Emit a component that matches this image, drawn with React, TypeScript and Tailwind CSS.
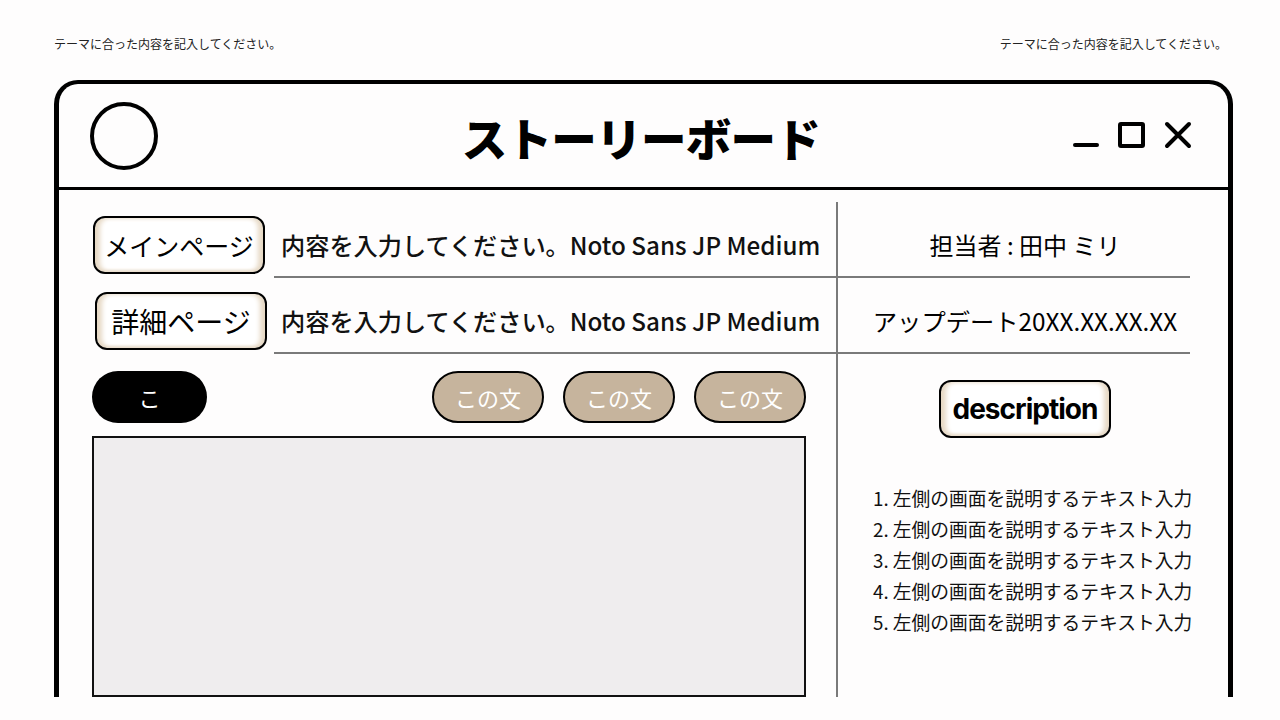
import React from 'react';

const jp = { fontFamily: '"Noto Sans CJK JP", "Noto Sans", sans-serif' };

const PageButton = ({ label, className = '' }: { label: string; className?: string }) => (
  <div
    className={`flex h-[58px] w-[172px] shrink-0 items-center justify-center rounded-[12px] border-2 border-black bg-white leading-none text-black shadow-[inset_6px_0_5px_-1px_#e6d8c4,inset_-6px_0_5px_-1px_#e6d8c4,inset_0_-3px_3px_-1px_#eee4d6] ${className}`}
  >
    {label}
  </div>
);

const InfoRow = ({ label, text, shift = '' }: { label: string; text: string; shift?: string }) => (
  <div className="flex items-end">
    <PageButton label={label} className={`mb-[4px] ${shift}`} />
    <div className="ml-[9px] flex h-[76px] flex-1 items-center border-b-2 border-[#7a7a7a] pl-[7px] pt-[12px] text-[24.2px] font-medium leading-none text-[#111]">
      {text}
    </div>
  </div>
);

const SidePill = () => (
  <div className="flex h-[52px] w-[112px] items-center justify-center rounded-full border-2 border-black bg-[#c6b49d] text-[22px] leading-none text-white">
    この文
  </div>
);

export default function App() {
  const items = [1, 2, 3, 4, 5];
  return (
    <div className="h-[720px] w-full overflow-hidden bg-[#fefdfd] text-black" style={jp}>
      {/* captions */}
      <div className="flex justify-between pl-[54px] pr-[53px] pt-[37px] text-[12px] leading-[14px] text-[#222]">
        <span>テーマに合った内容を記入してください。</span>
        <span>テーマに合った内容を記入してください。</span>
      </div>

      {/* window */}
      <div className="ml-[54px] mt-[29px] w-[1179px] rounded-t-[24px] border-x-[5px] border-t-4 border-black">
        {/* title bar */}
        <div className="grid h-[106px] grid-cols-[1fr_auto_1fr] items-center border-b-[3px] border-black pl-[31px] pr-[36px]">
          <div className="h-[68px] w-[68px] rounded-full border-4 border-black" />
          <div className="pt-[4px] text-[45.5px] font-black leading-none tracking-[-0.015em]">ストーリーボード</div>
          <div className="flex items-end justify-end gap-[19px] pb-[2px]">
            <div className="mb-[1px] h-[4px] w-[26px] rounded-full bg-black" />
            <div className="h-[26px] w-[27px] rounded-[3px] border-4 border-black" />
            <svg width="28" height="28" viewBox="0 0 28 28" className="-mb-[1px]">
              <path d="M3 3 L25 25 M25 3 L3 25" stroke="black" strokeWidth="4" strokeLinecap="round" />
            </svg>
          </div>
        </div>

        {/* body */}
        <div className="flex pt-[12px]">
          {/* left column */}
          <div className="w-[779px] border-r-2 border-[#7a7a7a] pl-[33px]">
            <InfoRow label="メインページ" text="内容を入力してください。Noto Sans JP Medium" shift="ml-[1px] text-[25px]" />
            <InfoRow label="詳細ページ" text="内容を入力してください。Noto Sans JP Medium" shift="ml-[3px] -mr-[2px] text-[28px]" />

            <div className="pr-[30px]">
              <div className="mt-[17px] flex items-center">
                <div className="flex h-[52px] w-[115px] items-center justify-center rounded-full bg-black text-[22px] leading-none text-white">
                  こ
                </div>
                <div className="ml-auto flex gap-[19px]">
                  <SidePill />
                  <SidePill />
                  <SidePill />
                </div>
              </div>
              <div className="mt-[13px] h-[261px] border-2 border-[#111] bg-[#efedee]" />
            </div>
          </div>

          {/* right column */}
          <div className="w-[352px]">
            <div className="flex h-[76px] items-center justify-center border-b-2 border-[#7a7a7a] pl-[22px] pt-[12px] text-[24px] leading-none">
              担当者 : 田中 ミリ
            </div>
            <div className="flex h-[76px] items-center justify-center border-b-2 border-[#7a7a7a] pl-[22px] pt-[12px] text-[24.3px] leading-none">
              アップデート20XX.XX.XX.XX
            </div>
            <div className="mt-[26px] flex justify-center pl-[22px]">
              <div
                className="flex h-[58px] w-[172px] items-center justify-center rounded-[12px] border-2 border-black bg-white text-[28px] font-bold leading-none tracking-[-0.035em] shadow-[inset_6px_0_5px_-1px_#e6d8c4,inset_-6px_0_5px_-1px_#e6d8c4,inset_0_-3px_3px_-1px_#eee4d6]"
                style={{ fontFamily: 'Inter, "Noto Sans", sans-serif' }}
              >
                description
              </div>
            </div>
            <ol className="mt-[44px] pl-[35px] text-[18.75px] leading-[31px] text-[#111]">
              {items.map((n) => (
                <li key={n} className="whitespace-nowrap">
                  {n}. 左側の画面を説明するテキスト入力
                </li>
              ))}
            </ol>
          </div>
        </div>
      </div>
    </div>
  );
}
